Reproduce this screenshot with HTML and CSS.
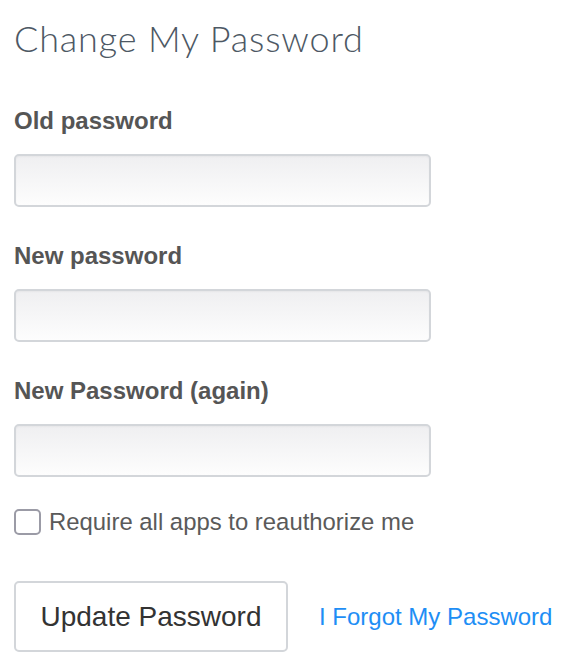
FILE: index.html
```html
<!DOCTYPE html>
<html>
<head>
<meta charset="utf-8">
<link rel="stylesheet" href="styles.css">
</head>
<body>
<form class="form">
  <h1 class="title">Change My Password</h1>
  <label class="label" for="old">Old password</label>
  <input class="field" id="old" type="password">
  <label class="label" for="new1">New password</label>
  <input class="field" id="new1" type="password">
  <label class="label" for="new2">New Password (again)</label>
  <input class="field" id="new2" type="password">
  <label class="check-row"><input class="check" type="checkbox"><span>Require all apps to reauthorize me</span></label>
  <div class="actions">
    <button class="btn" type="button">Update Password</button>
    <a class="link" href="#">I Forgot My Password</a>
  </div>
</form>
</body>
</html>
```
FILE: styles.css
```css
html, body {
  margin: 0;
  padding: 0;
  background: #ffffff;
}
body {
  font-family: "Liberation Sans", Arial, sans-serif;
}
.form {
  display: flex;
  flex-direction: column;
  align-items: flex-start;
  padding: 0 0 0 14px;
}
.title {
  font-family: Lato, "Open Sans", sans-serif;
  font-weight: 300;
  font-size: 36px;
  line-height: 40px;
  letter-spacing: 0.85px;
  color: #4d5864;
  margin: 18px 0 0 0;
}
.label {
  display: block;
  font-weight: bold;
  font-size: 24px;
  line-height: 28px;
  color: #555555;
  margin: 35px 0 19px 0;
}
.title + .label {
  margin-top: 49px;
}
.field {
  box-sizing: border-box;
  width: 417px;
  height: 53px;
  margin: 0;
  border: 2px solid #d3d6da;
  border-radius: 5px;
  background: linear-gradient(#efeff1, #fdfdfd);
  box-shadow: inset 0 1px 2px rgba(0,0,0,0.04);
  outline: none;
}
.check-row {
  display: flex;
  align-items: center;
  gap: 8px;
  margin-top: 31px;
  font-size: 23.9px;
  color: #5a5a5a;
  line-height: 28px;
}
.check {
  appearance: none;
  -webkit-appearance: none;
  box-sizing: border-box;
  width: 27px;
  height: 26px;
  margin: 0;
  border: 2px solid #9b9ba6;
  border-radius: 5px;
  background: #fff;
}
.actions {
  display: flex;
  align-items: center;
  gap: 31px;
  margin-top: 45px;
}
.btn {
  box-sizing: border-box;
  width: 274px;
  height: 71px;
  border: 2px solid #d3d6da;
  border-radius: 5px;
  background: #ffffff;
  font-family: "Liberation Sans", Arial, sans-serif;
  font-size: 28px;
  color: #333333;
  padding: 0;
}
.link {
  font-size: 24px;
  color: #1e8ef5;
  text-decoration: none;
}
```
